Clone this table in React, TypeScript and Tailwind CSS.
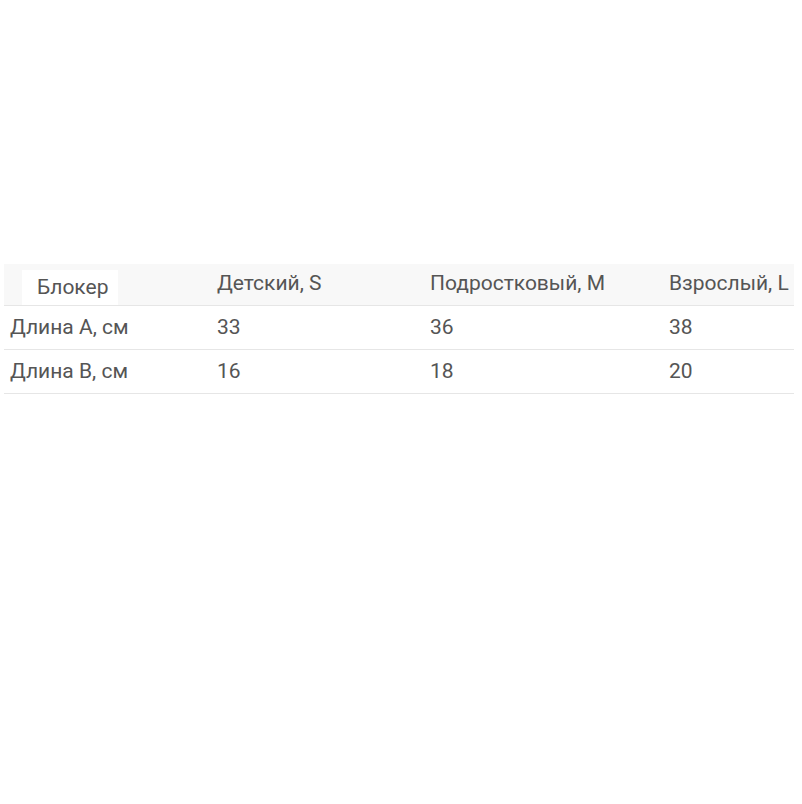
import React from "react";

const rows = [
  ["Длина А, см", "33", "36", "38"],
  ["Длина В, см", "16", "18", "20"],
];

const headers = ["Детский, S", "Подростковый, M", "Взрослый, L"];

export default function App() {
  return (
    <div className="w-[802px] h-[804px] bg-white pt-[264px] text-[#555555] text-[21px] leading-none whitespace-nowrap font-[family-name:Roboto,'Noto_Sans',sans-serif]">
      <div className="ml-[4px] w-[790px]">
        <div className="grid grid-cols-[207px_213px_239px_131px] h-[42px] bg-[#f8f8f8] border-b border-[#e6e6e6]">
          <div className="relative">
            <div className="absolute left-[18px] top-[6px] w-[96px] h-[35px] bg-white flex items-end pb-[7px] pl-[15px]">
              Блокер
            </div>
          </div>
          {headers.map((h) => (
            <div key={h} className="flex items-center pl-[6px] pb-[2px]">
              {h}
            </div>
          ))}
        </div>
        {rows.map((r, i) => (
          <div
            key={i}
            className="grid grid-cols-[207px_213px_239px_131px] h-[44px] border-b border-[#e6e6e6]"
          >
            {r.map((c, j) => (
              <div key={j} className="flex items-center pl-[6px]">
                {c}
              </div>
            ))}
          </div>
        ))}
      </div>
    </div>
  );
}
